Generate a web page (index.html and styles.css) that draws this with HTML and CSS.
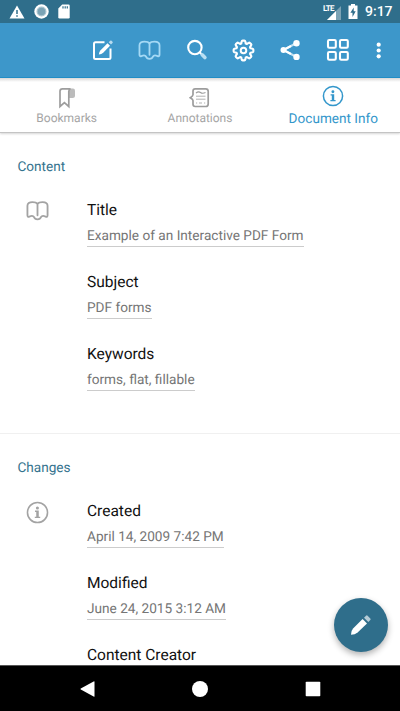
FILE: index.html
```html
<!DOCTYPE html>
<html lang="en">
<head>
<meta charset="utf-8">
<title>Document Info</title>
<link rel="stylesheet" href="styles.css">
</head>
<body>
<svg class="defs" aria-hidden="true">
  <symbol id="book" viewBox="0 0 24 22">
    <path d="M12 3.600C11 2.200 9 1.700 6.700 1.700 3.400 1.700 1.500 3 1.500 5.500V15.500Q1.500 17.600 3.500 16.800C5 16.200 7.600 16 8.300 17.300 8.900 19 10.300 19.800 12 19.800S15.100 19 15.700 17.300C16.400 16 19 16.200 20.500 16.800Q22.500 17.600 22.500 15.500V5.500C22.500 3 20.600 1.700 17.300 1.700 15 1.700 13 2.200 12 3.600V15.500" fill="none" stroke="currentColor" stroke-width="1.900" stroke-linejoin="round" stroke-linecap="round"/>
  </symbol>
  <symbol id="info" viewBox="0 0 22 22">
    <circle cx="11" cy="11" r="9.600" fill="none" stroke="currentColor" stroke-width="1.500"/>
    <circle cx="10.900" cy="6.700" r="1.450" fill="currentColor"/>
    <path d="M8.600 9.200H12.200V15H13.600V16.300H8.400V15H9.800V10.500H8.600Z" fill="currentColor"/>
  </symbol>
</svg>
<div class="screen">
  <header class="status">
    <div class="status-left">
      <svg width="16" height="14" viewBox="0 0 16 14"><path d="M8 .5 15.500 13.500H.5Z" fill="#fff"/><path d="M8 5v4M8 10.300v1.500" stroke="#2f6e8b" stroke-width="1.500"/></svg>
      <svg width="15" height="15" viewBox="0 0 15 15"><circle cx="7.500" cy="7.500" r="7.200" fill="#fff"/><circle cx="7.500" cy="7.500" r="4.400" fill="#7aa3b5" stroke="#a9c3ce" stroke-width="1.200"/></svg>
      <svg width="12" height="15" viewBox="0 0 12 15"><path d="M4.200.5H10.500Q11.700.5 11.700 1.700V13.300Q11.700 14.500 10.500 14.500H1.500Q.3 14.500.3 13.300V4.400Z" fill="#fff"/><path d="M5 2.200v2.300M7.200 2.200v2.300M9.300 2.200v2.300" stroke="#2f6e8b" stroke-width="1.200"/></svg>
    </div>
    <div class="status-right">
      <div class="signal"><span class="lte">LTE</span><svg width="14" height="14" viewBox="0 0 14 14"><path d="M14 0V14H0Z" fill="#7ba2b4"/><path d="M9 5V14H0Z" fill="#fff"/></svg></div>
      <svg class="battery" width="10" height="15" viewBox="0 0 10 15"><path d="M3 0H7V1.500H9.500V15H.5V1.500H3Z" fill="#fff"/><path d="M5.700 3.500 2.400 8.800H4.500V13L7.700 7.300H5.700Z" fill="#2f6e8b"/></svg>
      <span class="clock">9:17</span>
    </div>
  </header>
  <nav class="toolbar">
    <div class="tool"><svg width="22" height="22" viewBox="0 0 22 22"><path d="M12.500 3.300H3.500Q2 3.300 2 4.800V18.500Q2 20 3.500 20H17Q18.500 20 18.500 18.500V9.500" fill="none" stroke="#fff" stroke-width="2"/><path d="M6.800 15.500Q7.200 12.700 8.600 11.200L15.500 4.300 18 6.800 11.200 13.700Q9.500 15.200 6.800 15.500Z" fill="#fff"/><path d="M16.700 3.300 18.200 1.800Q18.900 1.100 19.600 1.800L20.500 2.700Q21.200 3.400 20.500 4.100L19 5.600Z" fill="#b7dbef"/></svg></div>
    <div class="tool active"><svg width="23" height="21"><use href="#book"/></svg></div>
    <div class="tool"><svg width="22" height="22" viewBox="0 0 22 22"><circle cx="8.900" cy="8.600" r="6.700" fill="none" stroke="#fff" stroke-width="2.100"/><path d="M13.700 13.300 15.500 15.100" stroke="#fff" stroke-width="2"/><path d="M16.200 15.800 18.900 18.500" stroke="#b9dff3" stroke-width="3.600" stroke-linecap="round"/></svg></div>
    <div class="tool"><svg width="23" height="23" viewBox="0 0 24 24"><path d="M9.700 4.700 10.100 2.500Q10.300 1.700 11.100 1.700H12.900Q13.700 1.700 13.900 2.500L14.300 4.700 15.600 5.200 17.400 4Q18.100 3.500 18.700 4.100L19.900 5.300Q20.500 5.900 20 6.600L18.800 8.400 19.300 9.700 21.500 10.100Q22.300 10.300 22.300 11.100V12.900Q22.300 13.700 21.500 13.900L19.300 14.300 18.800 15.600 20 17.400Q20.500 18.100 19.900 18.700L18.700 19.900Q18.100 20.500 17.400 20L15.600 18.800 14.300 19.300 13.900 21.500Q13.700 22.300 12.900 22.300H11.100Q10.300 22.300 10.100 21.500L9.700 19.300 8.400 18.800 6.600 20Q5.900 20.500 5.300 19.900L4.100 18.700Q3.500 18.100 4 17.400L5.200 15.600 4.700 14.300 2.500 13.900Q1.700 13.700 1.700 12.900V11.100Q1.700 10.300 2.500 10.100L4.700 9.700 5.200 8.400 4 6.600Q3.500 5.900 4.100 5.300L5.300 4.100Q5.900 3.500 6.600 4L8.400 5.200Z" fill="none" stroke="#fff" stroke-width="2.200" stroke-linejoin="round"/><circle cx="12" cy="12" r="2.900" fill="none" stroke="#fff" stroke-width="2.100"/></svg></div>
    <div class="tool"><svg width="22" height="22" viewBox="0 0 22 22"><path d="M16.500 4 3.400 11 16.500 18" fill="none" stroke="#c4e2f2" stroke-width="2"/><path d="M11 7 3.400 11 11 15" fill="none" stroke="#fff" stroke-width="2"/><circle cx="3.400" cy="11" r="2.900" fill="#fff"/><circle cx="16.500" cy="4.300" r="3.200" fill="#fff"/><circle cx="16.500" cy="17.900" r="3.200" fill="#fff"/></svg></div>
    <div class="tool"><svg width="24" height="24" viewBox="0 0 24 24" fill="none" stroke="#fff" stroke-width="2.100"><rect x="2" y="2" width="7.800" height="7.800" rx="1.200"/><rect x="14" y="2" width="7.800" height="7.800" rx="1.200"/><rect x="2" y="14" width="7.800" height="7.800" rx="1.200"/><rect x="14" y="14" width="7.800" height="7.800" rx="1.200"/></svg></div>
    <div class="tool more"><svg width="6" height="18" viewBox="0 0 6 18" fill="#fff"><circle cx="2.700" cy="3.700" r="2.100"/><circle cx="2.700" cy="9.500" r="2.100"/><circle cx="2.700" cy="15.300" r="2.100"/></svg></div>
  </nav>
  <nav class="tabs">
    <div class="tab"><svg width="22" height="22" viewBox="0 0 22 22"><path d="M12.500 1.500H17Q19 1.500 19 3.500V8.500Q19 11 16.500 11H12.500Z" fill="#bcbcbc"/><path d="M4 19.500V4.200Q4 1.800 6.400 1.800H14.500Q12.800 2.400 12.800 4.500V19.500L8.400 15.600Z" fill="#fff" stroke="#9d9d9d" stroke-width="1.700"/></svg><span>Bookmarks</span></div>
    <div class="tab"><svg width="22" height="22" viewBox="0 0 22 22" fill="none" stroke="#9d9d9d" stroke-width="1.700"><path d="M4 7.800V4Q4 1.800 6.200 1.800H16.700Q19.200 1.800 19.200 4.300V17Q19.200 19.500 16.700 19.500H6.200Q4 19.500 4 17.300V13.500Q4 12.300 1.300 10.700 4 9.200 4 7.800Z"/><path d="M7 9.200h9.500M7 12.200h9.500M7 16h1.200M10 16h3M15 16h1.200" stroke-width="1" stroke="#b1b1b1"/><path d="M7 6Q9.500 4 11.500 5.500T16.500 5.500" stroke-width="1.200"/></svg><span>Annotations</span></div>
    <div class="tab selected"><svg width="22" height="22"><use href="#info"/></svg><span>Document Info</span></div>
  </nav>
  <main>
    <section>
      <h2>Content</h2>
      <div class="group">
        <svg class="lead" width="23" height="22"><use href="#book"/></svg>
        <dl>
          <div class="field"><dt>Title</dt><dd>Example of an Interactive PDF Form</dd></div>
          <div class="field"><dt>Subject</dt><dd>PDF forms</dd></div>
          <div class="field"><dt>Keywords</dt><dd>forms, flat, fillable</dd></div>
        </dl>
      </div>
    </section>
    <section>
      <h2>Changes</h2>
      <div class="group">
        <svg class="lead" width="23" height="23"><use href="#info"/></svg>
        <dl>
          <div class="field"><dt>Created</dt><dd>April 14, 2009 7:42 PM</dd></div>
          <div class="field"><dt>Modified</dt><dd>June 24, 2015 3:12 AM</dd></div>
          <div class="field"><dt>Content Creator</dt></div>
        </dl>
      </div>
    </section>
  </main>
  <footer class="navbar">
    <div><svg width="16" height="18" viewBox="0 0 16 18"><path d="M14.500 1.800V16.200Q14.500 17 13.600 16.600L.8 9.600Q0 9 .8 8.400L13.600 1.400Q14.500 1 14.500 1.800Z" fill="#fff"/></svg></div>
    <div><svg width="18" height="18"><circle cx="9" cy="9" r="8" fill="#fff"/></svg></div>
    <div><svg width="16" height="16"><rect x=".7" y=".7" width="14.600" height="14.600" rx=".8" fill="#fff"/></svg></div>
  </footer>
  <div class="fab"><svg width="22" height="22" viewBox="0 0 22 22"><path d="M1 20.800Q1 16.500 3.300 14.200L12.600 5 17 9.400 7.600 18.600Q5 20.800 1 20.800Z" fill="#fff"/><path d="M14 3.700 16 1.700Q16.800.9 17.600 1.700L20.300 4.400Q21.100 5.200 20.300 6L18.300 8Z" fill="#b5cbd6"/></svg></div>
</div>
</body>
</html>
```
FILE: styles.css
```css
* { box-sizing: border-box; }
body { margin: 0; background: #fff; font-family: Roboto, "Liberation Sans", sans-serif; text-rendering: geometricPrecision; }
svg { display: block; flex: none; }
.defs { position: absolute; width: 0; height: 0; }
.screen {
  position: relative;
  display: flex;
  flex-direction: column;
  width: 400px;
  height: 711px;
  overflow: hidden;
}
.status {
  flex: none;
  display: flex;
  justify-content: space-between;
  height: 23px;
  padding: 0 8px 0 9px;
  background: #2f6e8b;
  color: #fff;
}
.status-left, .status-right { display: flex; align-items: center; }
.status-left { gap: 9px; }
.signal { display: flex; align-items: flex-start; margin-right: 7px; padding-top: 1px; }
.lte { width: 10px; margin-right: -6px; z-index: 1; font-size: 8px; line-height: 8px; font-weight: 700; letter-spacing: -.7px; }
.signal svg { margin-top: 1px; }
.clock { width: 27px; margin-left: 7px; padding-top: 2px; font-size: 14px; font-weight: 500; line-height: 23px; white-space: nowrap; }
.toolbar {
  flex: none;
  display: flex;
  justify-content: flex-end;
  align-items: center;
  height: 55px;
  padding-right: 3px;
  background: #3d97ca;
  border-bottom: 1px solid #218fc9;
}
.tool { display: flex; justify-content: center; width: 47px; color: #fff; }
.tool.active { color: #a5d9f5; }
.tool.more { width: 36px; }
.tabs {
  flex: none;
  display: grid;
  grid-template-columns: repeat(3, 1fr);
  height: 55px;
  background: linear-gradient(#d8d8d8, #fff 4px);
  border-bottom: 1px solid #c4c4c4;
  box-shadow: 0 1px 2px rgba(0, 0, 0, .16);
  color: #a5a5a5;
  font-size: 12px;
}
.tab { display: flex; flex-direction: column; align-items: center; padding-top: 9px; }
.tab span { line-height: 18px; }
.tab.selected { padding-top: 7px; color: #3497cb; font-size: 13.600px; }
.tab.selected span { margin-top: 3px; }
main { flex: 1; min-height: 0; overflow: hidden; }
section { height: 301px; padding: 24px 17px 0 17.500px; border-bottom: 1px solid #f0f0f0; }
h2 { margin: 0; font-size: 13.600px; line-height: 20px; font-weight: 400; color: #35738e; }
.group { display: flex; margin-top: 23px; }
.lead { width: 23px; margin: 0 38.500px 0 8px; color: #a3a3a3; }
dl { margin: 0; }
.field { height: 72px; }
dt { font-size: 15.500px; line-height: 20px; color: #111; }
dd { width: fit-content; height: 21px; margin: 6px 0 0; border-bottom: 1px solid #ccc; font-size: 13.630px; line-height: 21px; color: #757575; white-space: nowrap; }
.navbar {
  flex: none;
  display: flex;
  justify-content: center;
  align-items: center;
  height: 46px;
  background: #000;
  border-top: 1px solid #555;
}
.navbar div { display: flex; justify-content: center; width: 112.500px; }
.fab {
  position: absolute;
  right: 12px;
  bottom: 59px;
  display: grid;
  place-items: center;
  width: 54px;
  height: 54px;
  border-radius: 50%;
  background: #2f6e8b;
  box-shadow: 0 3px 6px rgba(0, 0, 0, .3);
}
```
